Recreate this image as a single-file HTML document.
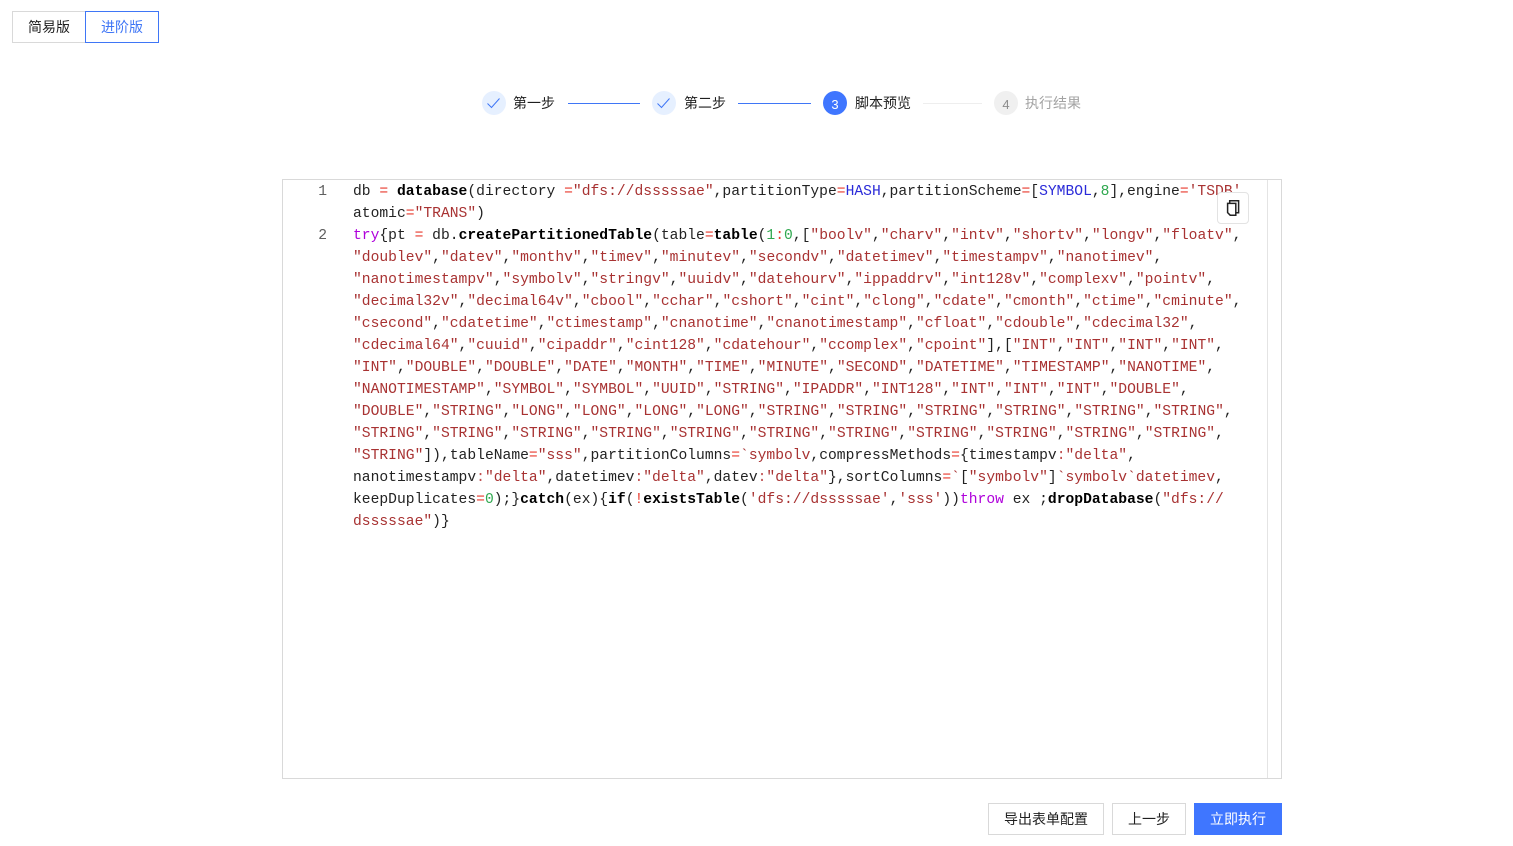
<!DOCTYPE html>
<html lang="zh">
<head>
<meta charset="utf-8">
<title>脚本预览</title>
<style>
html,body{margin:0;padding:0;background:#fff;}
body{position:relative;width:1513px;height:846px;overflow:hidden;font-family:"Liberation Sans","Noto Sans CJK SC",sans-serif;font-size:14px;color:#1f1f1f;}
.a{position:absolute;box-sizing:border-box;}
.btn{display:flex;align-items:center;justify-content:center;border:1px solid #d9d9d9;background:#fff;color:#1f1f1f;line-height:1;}
.circle{width:24px;height:24px;top:91px;border-radius:50%;display:flex;align-items:center;justify-content:center;font-size:13px;padding-top:2px;}
.done{background:#e6f0ff;padding-top:0;}
.st{top:93px;height:20px;line-height:20px;white-space:nowrap;}
.ln{top:103px;height:1px;background:#3f76f6;}
.code{left:353px;font-family:"Liberation Mono",monospace;font-size:14.667px;line-height:22px;height:22px;white-space:pre;color:#222;}
.no{left:283px;width:44px;text-align:right;font-family:"Liberation Mono",monospace;font-size:14.667px;line-height:22px;height:22px;color:#5f5f5f;}
.s{color:#a83232;}.o{color:#e8392c;}.n{color:#2fa84f;}.k{color:#af00db;}.c{color:#2a2ad8;}.f{font-weight:bold;color:#000;}.g{color:#c05050;}
</style>
</head>
<body>
<div class="a btn" style="left:12px;top:11px;width:74px;height:32px;">简易版</div>
<div class="a btn" style="left:85px;top:11px;width:74px;height:32px;border-color:#3f76f6;color:#3f76f6;">进阶版</div>

<div class="a circle done" style="left:482px;"><svg width="16" height="16" viewBox="0 0 16 16"><path d="M1.5 8.5L5.5 12.5L13.5 3.5" fill="none" stroke="#3f76f6" stroke-width="1"/></svg></div>
<div class="a st" style="left:513px;">第一步</div>
<div class="a ln" style="left:568px;width:72px;"></div>
<div class="a circle done" style="left:652px;"><svg width="16" height="16" viewBox="0 0 16 16"><path d="M1.5 8.5L5.5 12.5L13.5 3.5" fill="none" stroke="#3f76f6" stroke-width="1"/></svg></div>
<div class="a st" style="left:684px;">第二步</div>
<div class="a ln" style="left:738px;width:73px;"></div>
<div class="a circle" style="left:823px;background:#3f76ff;color:#fff;">3</div>
<div class="a st" style="left:855px;">脚本预览</div>
<div class="a ln" style="left:923px;width:59px;background:#eeeeee;"></div>
<div class="a circle" style="left:994px;background:#f0f0f0;color:#8c8c8c;">4</div>
<div class="a st" style="left:1025px;color:#a3a3a3;">执行结果</div>

<div class="a" style="left:282px;top:179px;width:1000px;height:600px;border:1px solid #d9d9d9;overflow:hidden;"></div>
<div class="a" style="left:1267px;top:180px;width:1px;height:598px;background:#e4e4e4;"></div>

<div class="a no" style="top:181px;">1</div>
<div class="a no" style="top:225px;">2</div>

<div class="a code" style="top:181px;">db <span class="o">=</span> <span class="f">database</span>(directory <span class="o">=</span><span class="s">"dfs://dsssssae"</span>,partitionType<span class="o">=</span><span class="c">HASH</span>,partitionScheme<span class="o">=</span>[<span class="c">SYMBOL</span>,<span class="n">8</span>],engine<span class="o">=</span><span class="s">'TSDB'</span>,</div>
<div class="a code" style="top:203px;">atomic<span class="o">=</span><span class="s">"TRANS"</span>)</div>
<div class="a code" style="top:225px;"><span class="k">try</span>{pt <span class="o">=</span> db.<span class="f">createPartitionedTable</span>(table<span class="o">=</span><span class="f">table</span>(<span class="n">1</span><span class="o">:</span><span class="n">0</span>,[<span class="s">"boolv"</span>,<span class="s">"charv"</span>,<span class="s">"intv"</span>,<span class="s">"shortv"</span>,<span class="s">"longv"</span>,<span class="s">"floatv"</span>,</div>
<div class="a code" style="top:247px;"><span class="s">"doublev"</span>,<span class="s">"datev"</span>,<span class="s">"monthv"</span>,<span class="s">"timev"</span>,<span class="s">"minutev"</span>,<span class="s">"secondv"</span>,<span class="s">"datetimev"</span>,<span class="s">"timestampv"</span>,<span class="s">"nanotimev"</span>,</div>
<div class="a code" style="top:269px;"><span class="s">"nanotimestampv"</span>,<span class="s">"symbolv"</span>,<span class="s">"stringv"</span>,<span class="s">"uuidv"</span>,<span class="s">"datehourv"</span>,<span class="s">"ippaddrv"</span>,<span class="s">"int128v"</span>,<span class="s">"complexv"</span>,<span class="s">"pointv"</span>,</div>
<div class="a code" style="top:291px;"><span class="s">"decimal32v"</span>,<span class="s">"decimal64v"</span>,<span class="s">"cbool"</span>,<span class="s">"cchar"</span>,<span class="s">"cshort"</span>,<span class="s">"cint"</span>,<span class="s">"clong"</span>,<span class="s">"cdate"</span>,<span class="s">"cmonth"</span>,<span class="s">"ctime"</span>,<span class="s">"cminute"</span>,</div>
<div class="a code" style="top:313px;"><span class="s">"csecond"</span>,<span class="s">"cdatetime"</span>,<span class="s">"ctimestamp"</span>,<span class="s">"cnanotime"</span>,<span class="s">"cnanotimestamp"</span>,<span class="s">"cfloat"</span>,<span class="s">"cdouble"</span>,<span class="s">"cdecimal32"</span>,</div>
<div class="a code" style="top:335px;"><span class="s">"cdecimal64"</span>,<span class="s">"cuuid"</span>,<span class="s">"cipaddr"</span>,<span class="s">"cint128"</span>,<span class="s">"cdatehour"</span>,<span class="s">"ccomplex"</span>,<span class="s">"cpoint"</span>],[<span class="s">"INT"</span>,<span class="s">"INT"</span>,<span class="s">"INT"</span>,<span class="s">"INT"</span>,</div>
<div class="a code" style="top:357px;"><span class="s">"INT"</span>,<span class="s">"DOUBLE"</span>,<span class="s">"DOUBLE"</span>,<span class="s">"DATE"</span>,<span class="s">"MONTH"</span>,<span class="s">"TIME"</span>,<span class="s">"MINUTE"</span>,<span class="s">"SECOND"</span>,<span class="s">"DATETIME"</span>,<span class="s">"TIMESTAMP"</span>,<span class="s">"NANOTIME"</span>,</div>
<div class="a code" style="top:379px;"><span class="s">"NANOTIMESTAMP"</span>,<span class="s">"SYMBOL"</span>,<span class="s">"SYMBOL"</span>,<span class="s">"UUID"</span>,<span class="s">"STRING"</span>,<span class="s">"IPADDR"</span>,<span class="s">"INT128"</span>,<span class="s">"INT"</span>,<span class="s">"INT"</span>,<span class="s">"INT"</span>,<span class="s">"DOUBLE"</span>,</div>
<div class="a code" style="top:401px;"><span class="s">"DOUBLE"</span>,<span class="s">"STRING"</span>,<span class="s">"LONG"</span>,<span class="s">"LONG"</span>,<span class="s">"LONG"</span>,<span class="s">"LONG"</span>,<span class="s">"STRING"</span>,<span class="s">"STRING"</span>,<span class="s">"STRING"</span>,<span class="s">"STRING"</span>,<span class="s">"STRING"</span>,<span class="s">"STRING"</span>,</div>
<div class="a code" style="top:423px;"><span class="s">"STRING"</span>,<span class="s">"STRING"</span>,<span class="s">"STRING"</span>,<span class="s">"STRING"</span>,<span class="s">"STRING"</span>,<span class="s">"STRING"</span>,<span class="s">"STRING"</span>,<span class="s">"STRING"</span>,<span class="s">"STRING"</span>,<span class="s">"STRING"</span>,<span class="s">"STRING"</span>,</div>
<div class="a code" style="top:445px;"><span class="s">"STRING"</span>]),tableName<span class="o">=</span><span class="s">"sss"</span>,partitionColumns<span class="o">=</span><span class="s">`symbolv</span>,compressMethods<span class="o">=</span>{timestampv<span class="g">:</span><span class="s">"delta"</span>,</div>
<div class="a code" style="top:467px;">nanotimestampv<span class="g">:</span><span class="s">"delta"</span>,datetimev<span class="g">:</span><span class="s">"delta"</span>,datev<span class="g">:</span><span class="s">"delta"</span>},sortColumns<span class="o">=</span><span class="s">`</span>[<span class="s">"symbolv"</span>]<span class="s">`symbolv`datetimev</span>,</div>
<div class="a code" style="top:489px;">keepDuplicates<span class="o">=</span><span class="n">0</span>);}<span class="f">catch</span>(ex){<span class="f">if</span>(<span class="o">!</span><span class="f">existsTable</span>(<span class="s">'dfs://dsssssae'</span>,<span class="s">'sss'</span>))<span class="k">throw</span> ex ;<span class="f">dropDatabase</span>(<span class="s">"dfs://</span></div>
<div class="a code" style="top:511px;"><span class="s">dsssssae"</span>)}</div>

<div class="a" style="left:1217px;top:192px;width:32px;height:32px;background:#fff;border:1px solid #e3e3e3;border-radius:4px;display:flex;align-items:center;justify-content:center;">
<svg width="16" height="16" viewBox="0 0 16 16" fill="none" stroke="#222" stroke-width="1.5"><path d="M4.7 3V0.8H13.6V12.8H11"/><path d="M2.6 3.4H10.8V15.2H5.2L2.6 12.6Z"/></svg>
</div>

<div class="a btn" style="left:988px;top:803px;width:116px;height:32px;">导出表单配置</div>
<div class="a btn" style="left:1112px;top:803px;width:74px;height:32px;">上一步</div>
<div class="a btn" style="left:1194px;top:803px;width:88px;height:32px;background:#3f76ff;border-color:#3f76ff;color:#fff;">立即执行</div>
</body>
</html>
